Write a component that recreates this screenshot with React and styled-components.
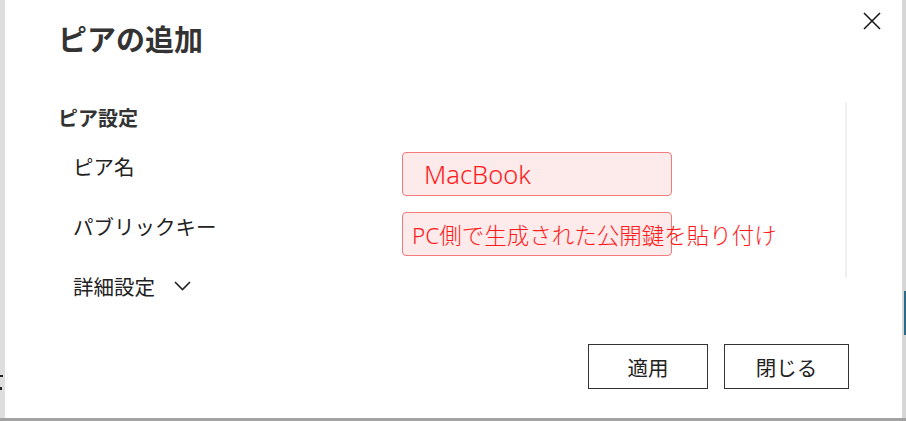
import React from "react";
import styled, { createGlobalStyle } from "styled-components";

const Global = createGlobalStyle`
  html, body { margin: 0; padding: 0; background: #dcdcdc; }
  body { font-family: "Noto Sans CJK JP", "Noto Sans", sans-serif; }
  * { box-sizing: border-box; }
`;

const Screen = styled.div`
  width: 906px;
  height: 421px;
  display: flex;
  background: #dedede;
  border-bottom: 3px solid #a2a2a2;
  overflow: hidden;
`;

const LeftGutter = styled.div`
  width: 5px;
  flex: none;
  display: flex;
  flex-direction: column;
  padding-top: 375px;
  gap: 10px;
`;

const Mark = styled.span`
  display: block;
  width: ${(p) => p.$w}px;
  height: ${(p) => p.$h}px;
  background: #222;
`;

const RightGutter = styled.div`
  width: 4px;
  flex: none;
  display: flex;
  flex-direction: column;
  align-items: flex-end;
  padding-top: 291px;
  background: #d6d6d6;
`;

const TealBar = styled.div`
  width: 2px;
  height: 44px;
  background: #2c6a86;
`;

const Dialog = styled.div`
  flex: 1;
  height: 418px;
  background: #fff;
  display: flex;
  flex-direction: column;
`;

const Header = styled.div`
  display: flex;
  justify-content: space-between;
  align-items: flex-start;
  padding: 12px 21px 0 53px;
`;

const Title = styled.h1`
  margin: 6px 0 0;
  font-size: 29px;
  line-height: 40px;
  font-weight: 700;
  color: #333;
`;

const CloseButton = styled.button`
  width: 18px;
  height: 18px;
  padding: 0;
  border: 0;
  background: none;
  display: block;
  cursor: pointer;
  svg { display: block; }
`;

const Body = styled.div`
  margin-top: 44px;
  padding-left: 53px;
  display: flex;
`;

const Content = styled.div`
  width: 787px;
  padding-top: 2px;
`;

const ScrollTrack = styled.div`
  width: 2px;
  height: 176px;
  background: #f0f0f0;
`;

const SectionTitle = styled.h2`
  margin: 0;
  font-size: 20px;
  line-height: 28px;
  font-weight: 700;
  color: #333;
`;

const Form = styled.div`
  margin-top: 20px;
  padding-left: 15px;
  display: grid;
  grid-template-columns: 329px 270px;
  row-gap: 16px;
`;

const Label = styled.div`
  align-self: start;
  font-size: 20.5px;
  line-height: 28px;
  color: #222;
  display: flex;
  align-items: center;
  gap: 19px;
`;

const Field = styled.div`
  height: 44px;
  border: 1px solid #f27b7b;
  border-radius: 4px;
  background: #fdeaea;
  display: flex;
  align-items: center;
  padding-left: ${(p) => p.$indent}px;
  white-space: nowrap;
  overflow: visible;
  font-family: "Noto Sans", "Noto Sans CJK JP", sans-serif;
  font-weight: 300;
  font-size: ${(p) => p.$size}px;
  color: #ff1a1a;
`;

const Footer = styled.div`
  margin-top: 44px;
  padding-right: 53px;
  display: flex;
  justify-content: flex-end;
  gap: 16px;
`;

const Button = styled.button`
  width: ${(p) => p.$w}px;
  height: 45px;
  border: 1px solid #333;
  background: #fff;
  font-family: "Noto Sans CJK JP", sans-serif;
  font-size: 20.5px;
  color: #222;
  padding: 0;
  cursor: pointer;
`;

const Chevron = () => (
  <svg width="17" height="10" viewBox="0 0 17 10">
    <path d="M1 1 L8.5 8.5 L16 1" fill="none" stroke="#222" strokeWidth="1.6" />
  </svg>
);

export default function App() {
  return (
    <>
      <Global />
      <Screen>
        <LeftGutter>
          <Mark $w={3} $h={2} />
          <Mark $w={2} $h={3} />
        </LeftGutter>
        <Dialog>
          <Header>
            <Title>ピアの追加</Title>
            <CloseButton aria-label="閉じる">
              <svg width="18" height="18" viewBox="0 0 18 18">
                <path d="M1 1 L17 17 M17 1 L1 17" stroke="#111" strokeWidth="1.5" />
              </svg>
            </CloseButton>
          </Header>
          <Body>
            <Content>
              <SectionTitle>ピア設定</SectionTitle>
              <Form>
                <Label>ピア名</Label>
                <Field $indent={21} $size={25.5}>MacBook</Field>
                <Label>パブリックキー</Label>
                <Field $indent={9} $size={22.5}>PC側で生成された公開鍵を貼り付け</Field>
                <Label>
                  詳細設定
                  <Chevron />
                </Label>
              </Form>
            </Content>
            <ScrollTrack />
          </Body>
          <Footer>
            <Button $w={120}>適用</Button>
            <Button $w={125}>閉じる</Button>
          </Footer>
        </Dialog>
        <RightGutter>
          <TealBar />
        </RightGutter>
      </Screen>
    </>
  );
}
